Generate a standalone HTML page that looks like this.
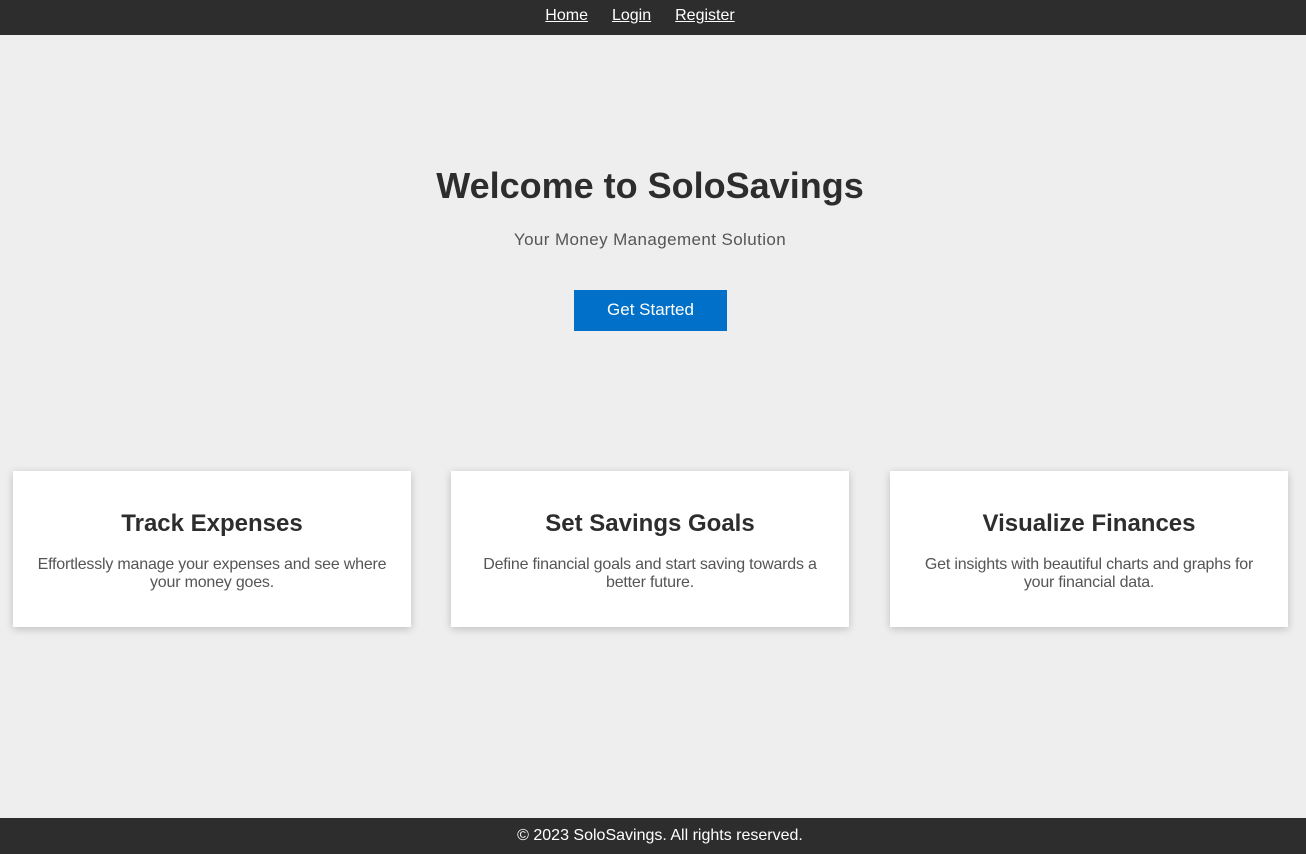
<!DOCTYPE html>
<html><head><style>
body{margin:0;width:1306px;height:854px;background:#eee;font-family:"Liberation Sans",Arial,sans-serif;position:relative;overflow:hidden}
nav{position:absolute;top:0;left:0;width:1306px;height:35px;background:#2d2d2d;text-align:center;line-height:31px;font-size:16px;box-sizing:border-box;padding-right:26px}
nav a{color:#fff;text-decoration:underline;margin:0 12px}
h1{position:absolute;top:164px;left:0;width:1300px;text-align:center;margin:0;font-size:36px;line-height:44px;color:#2d2d2d;font-weight:bold}
.sub{position:absolute;top:230px;left:0;width:1300px;text-align:center;font-size:17px;color:#555;letter-spacing:0.4px}
.btn{position:absolute;left:574px;top:290px;width:153px;height:41px;background:#0070c9;color:#fff;font-size:17px;text-align:center;line-height:40px}
.card{position:absolute;top:471px;width:398px;height:156px;background:#fff;box-shadow:0 2px 8px rgba(0,0,0,.2);text-align:center;box-sizing:border-box;padding:0 20px}
.card h2{margin:39px 0 18px;font-size:24px;line-height:28px;color:#2d2d2d}
.card p{margin:0;font-size:16px;line-height:18px;color:#555;letter-spacing:-0.2px}
footer{position:absolute;top:818px;left:0;width:1306px;height:36px;background:#2d2d2d;color:#fff;text-align:center;font-size:16px;line-height:36px;box-sizing:border-box;padding-left:14px}
</style></head><body>
<nav><a>Home</a><a>Login</a><a>Register</a></nav>
<h1>Welcome to SoloSavings</h1>
<div class="sub">Your Money Management Solution</div>
<div class="btn">Get Started</div>
<div class="card" style="left:13px;padding:0 10px"><h2>Track Expenses</h2><p>Effortlessly manage your expenses and see where your money goes.</p></div>
<div class="card" style="left:451px"><h2>Set Savings Goals</h2><p>Define financial goals and start saving towards a better future.</p></div>
<div class="card" style="left:890px"><h2>Visualize Finances</h2><p>Get insights with beautiful charts and graphs for your financial data.</p></div>
<footer>© 2023 SoloSavings. All rights reserved.</footer>
</body></html>
